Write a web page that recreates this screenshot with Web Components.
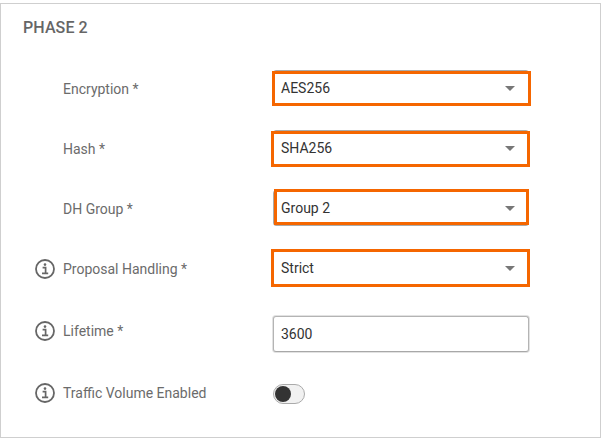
<!DOCTYPE html>
<html>
<head>
<meta charset="utf-8">
<style>
  html, body { margin: 0; padding: 0; background: #fff; }
  body { font-family: Roboto, "Liberation Sans", sans-serif; }
</style>
</head>
<body>
<phase-card heading="PHASE 2">
  <form-row style="--label-shift: 1px">
    <span slot="label">Encryption *</span>
    <select-field value="AES256" marked style="--mark-l: -1px; --mark-r: -2px; --mark-t: 1px; --mark-b: 0px"></select-field>
  </form-row>
  <form-row style="--label-shift: 1px">
    <span slot="label">Hash *</span>
    <select-field value="SHA256" marked style="--mark-l: -2px; --mark-r: -1px; --mark-t: 1px; --mark-b: -1px"></select-field>
  </form-row>
  <form-row style="--label-shift: 1px">
    <span slot="label">DH Group *</span>
    <select-field value="Group 2" marked style="--mark-l: 1px; --mark-r: 0px; --mark-t: -1px; --mark-b: 1px"></select-field>
  </form-row>
  <form-row info style="--label-shift: 1px">
    <span slot="label">Proposal Handling *</span>
    <select-field value="Strict" marked style="--mark-l: -2px; --mark-r: -1px; --mark-t: -1px; --mark-b: -1px"></select-field>
  </form-row>
  <form-row info style="--label-shift: -3px; --row-gap: 30px">
    <span slot="label">Lifetime *</span>
    <text-field value="3600"></text-field>
  </form-row>
  <form-row info style="--label-shift: -1px; --row-gap: 32px; --row-height: 20px">
    <span slot="label">Traffic Volume Enabled</span>
    <toggle-switch></toggle-switch>
  </form-row>
</phase-card>

<script>
class PhaseCard extends HTMLElement {
  constructor() {
    super();
    this.attachShadow({ mode: 'open' });
    this.shadowRoot.innerHTML = `
      <style>
        :host {
          display: block;
          box-sizing: border-box;
          width: 601px;
          height: 435px;
          margin-top: 3px;
          border: 1px solid #cfcfcf;
          padding: 15px 0 0 22px;
          background: #fff;
        }
        h2 {
          margin: 0 0 33px;
          font-size: 16px;
          line-height: 18px;
          font-weight: 500;
          letter-spacing: 0.1px;
          color: #666;
        }
      </style>
      <h2>${this.getAttribute('heading')}</h2>
      <slot></slot>
    `;
  }
}

class FormRow extends HTMLElement {
  constructor() {
    super();
    this.attachShadow({ mode: 'open' });
    const icon = this.hasAttribute('info') ? `
      <svg width="22" height="22" viewBox="0 0 22 22" fill="none" stroke="#666">
        <circle cx="11" cy="11" r="9" stroke-width="1.8"/>
        <circle cx="11" cy="6.6" r="1.3" fill="#666" stroke="none"/>
        <path d="M8.6 9.7h3v5.6M8 15.4h6.2" stroke-width="1.7"/>
      </svg>` : '';
    this.shadowRoot.innerHTML = `
      <style>
        :host {
          display: grid;
          grid-template-columns: 11px 22px 7px 210px 256px;
          align-items: center;
          height: var(--row-height, 36px);
          margin-top: var(--row-gap, 24px);
        }
        :host(:first-of-type) { margin-top: 0; }
        .icon { grid-column: 2; display: flex; margin-top: calc(var(--label-shift, 0px) * 2); }
        :host(:not([info])) .icon { display: none; }
        .label {
          grid-column: 4;
          font-size: 14px;
          line-height: 18px;
          color: #6b6b6b;
          margin-top: calc(var(--label-shift, 0px) * 2);
        }
        .field { grid-column: 5; height: 100%; }
      </style>
      <div class="icon">${icon}</div>
      <div class="label"><slot name="label"></slot></div>
      <div class="field"><slot></slot></div>
    `;
  }
}

class SelectField extends HTMLElement {
  constructor() {
    super();
    this.attachShadow({ mode: 'open' });
    this.shadowRoot.innerHTML = `
      <style>
        :host {
          display: flex;
          position: relative;
          box-sizing: border-box;
          height: 36px;
          align-items: center;
          justify-content: space-between;
          padding: 0 13px 0 7px;
          border-radius: 3px;
          border: 1px solid #aaa;
          font-size: 14px;
          color: #333;
          background: #fff;
        }
        .arrow {
          width: 0;
          height: 0;
          border-left: 5px solid transparent;
          border-right: 5px solid transparent;
          border-top: 5px solid #777;
        }
        .mark {
          position: absolute;
          left: calc(-1px + var(--mark-l, 0px));
          right: calc(-1px + var(--mark-r, 0px));
          top: calc(-1px + var(--mark-t, 0px));
          bottom: calc(-1px + var(--mark-b, 0px));
          border: 3px solid #f56600;
          pointer-events: none;
        }
        :host(:not([marked])) .mark { display: none; }
      </style>
      <span>${this.getAttribute('value')}</span>
      <span class="arrow"></span>
      <div class="mark"></div>
    `;
  }
}

class TextField extends HTMLElement {
  constructor() {
    super();
    this.attachShadow({ mode: 'open' });
    this.shadowRoot.innerHTML = `
      <style>
        :host {
          display: flex;
          box-sizing: border-box;
          height: 36px;
          align-items: center;
          padding: 0 7px;
          border-radius: 3px;
          border: 1px solid #b4b4b4;
          border-bottom-color: #a8a8a8;
          box-shadow: 0 0 0 1px #e2e2e2;
          font-size: 14px;
          color: #333;
          background: #fff;
        }
      </style>
      <span>${this.getAttribute('value')}</span>
    `;
  }
}

class ToggleSwitch extends HTMLElement {
  constructor() {
    super();
    this.attachShadow({ mode: 'open' });
    this.shadowRoot.innerHTML = `
      <style>
        :host {
          display: flex;
          box-sizing: border-box;
          width: 32px;
          height: 20px;
          align-items: center;
          padding-left: 1px;
          border-radius: 10px;
          border: 1px solid #aaa;
          background: #f1f1f1;
        }
        .knob { width: 16px; height: 16px; border-radius: 50%; background: #333; }
      </style>
      <div class="knob"></div>
    `;
  }
}

customElements.define('phase-card', PhaseCard);
customElements.define('form-row', FormRow);
customElements.define('select-field', SelectField);
customElements.define('text-field', TextField);
customElements.define('toggle-switch', ToggleSwitch);
</script>
</body>
</html>
